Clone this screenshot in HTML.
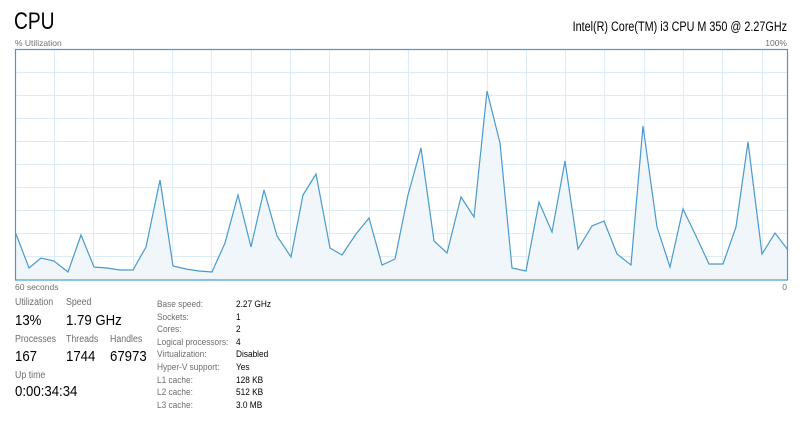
<!DOCTYPE html>
<html><head><meta charset="utf-8"><style>
body{margin:0;width:800px;height:425px;background:#fff;font-family:"Liberation Sans",sans-serif;position:relative;overflow:hidden;color:#000}
.a{position:absolute;white-space:nowrap}
.g{color:#707070}
.lb{font-size:10px;color:#6d6d6d;transform:scaleX(0.88);transform-origin:left}
.v{font-size:15px;transform:scaleX(0.88);transform-origin:left}
.t{font-size:9px;transform:scaleX(0.92);transform-origin:left}
</style></head><body>
<div class="a" style="left:14px;top:8px;font-size:24px;transform:scaleX(0.8);transform-origin:left">CPU</div>
<div class="a" style="right:13px;top:19px;font-size:13.5px;transform:scaleX(0.8);transform-origin:right">Intel(R) Core(TM) i3 CPU M 350 @ 2.27GHz</div>
<div class="a g" style="left:15px;top:38px;font-size:8.5px">% Utilization</div>
<div class="a g" style="right:13px;top:38px;font-size:8.5px">100%</div>
<div class="a g" style="left:15px;top:282px;font-size:8.5px">60 seconds</div>
<div class="a g" style="right:13px;top:282px;font-size:8.5px">0</div>
<svg class="a" style="left:0;top:0" width="800" height="425">
<g stroke="#dcebf6" stroke-width="1">
<path d="M54.5 49V280M93.5 49V280M133.5 49V280M172.5 49V280M211.5 49V280M251.5 49V280M290.5 49V280M329.5 49V280M369.5 49V280M408.5 49V280M447.5 49V280M487.5 49V280M526.5 49V280M565.5 49V280M604.5 49V280M644.5 49V280M683.5 49V280M722.5 49V280M762.5 49V280"/>
<path d="M15 72.5H788M15 95.5H788M15 118.5H788M15 141.5H788M15 164.5H788M15 187.5H788M15 210.5H788M15 233.5H788M15 256.5H788"/>
</g>
<polygon fill="#f1f6fa" points="16,280 16,234 29,268 41,258 54,261 68,272 81,235 94,267 107,268 120,270 133,270 146,247 160,180 173,266 186,269 199,271 212,272 225,243 238,195 251,247 264,190 277,236 291,257 303,195 316,174 330,248 342,255 356,234 369,218 382,265 395,259 408,195 421,148 434,241 447,253 461,197 474,217 487,91 500,143 512,268 526,271 539,202 552,232 565,161 578,249 592,226 604,221 617,254 631,265 643,126 657,227 670,267 683,209 696,236 709,264 723,264 736,227 748,142 762,254 775,233 788,250 788,280"/>
<polyline fill="none" stroke="#4a9acd" stroke-width="1.2" points="16,234 29,268 41,258 54,261 68,272 81,235 94,267 107,268 120,270 133,270 146,247 160,180 173,266 186,269 199,271 212,272 225,243 238,195 251,247 264,190 277,236 291,257 303,195 316,174 330,248 342,255 356,234 369,218 382,265 395,259 408,195 421,148 434,241 447,253 461,197 474,217 487,91 500,143 512,268 526,271 539,202 552,232 565,161 578,249 592,226 604,221 617,254 631,265 643,126 657,227 670,267 683,209 696,236 709,264 723,264 736,227 748,142 762,254 775,233 788,250"/>
<rect x="15.5" y="49.5" width="772" height="230.5" fill="none" stroke="#4a9acd" stroke-width="1.2"/>
</svg>
<div class="a lb" style="left:15px;top:297px">Utilization</div>
<div class="a lb" style="left:66px;top:297px">Speed</div>
<div class="a v" style="left:15px;top:312px">13%</div>
<div class="a v" style="left:66px;top:312px">1.79 GHz</div>
<div class="a lb" style="left:15px;top:334px">Processes</div>
<div class="a lb" style="left:66px;top:334px">Threads</div>
<div class="a lb" style="left:110px;top:334px">Handles</div>
<div class="a v" style="left:15px;top:348px">167</div>
<div class="a v" style="left:66px;top:348px">1744</div>
<div class="a v" style="left:110px;top:348px">67973</div>
<div class="a lb" style="left:15px;top:370px">Up time</div>
<div class="a v" style="left:15px;top:383px">0:00:34:34</div>
<div class="a t g" style="left:157px;top:298px;line-height:12.6px;color:#6d6d6d">Base speed:<br>Sockets:<br>Cores:<br>Logical processors:<br>Virtualization:<br>Hyper-V support:<br>L1 cache:<br>L2 cache:<br>L3 cache:</div>
<div class="a t" style="left:236px;top:298px;line-height:12.6px">2.27 GHz<br>1<br>2<br>4<br>Disabled<br>Yes<br>128 KB<br>512 KB<br>3.0 MB</div>
</body></html>
